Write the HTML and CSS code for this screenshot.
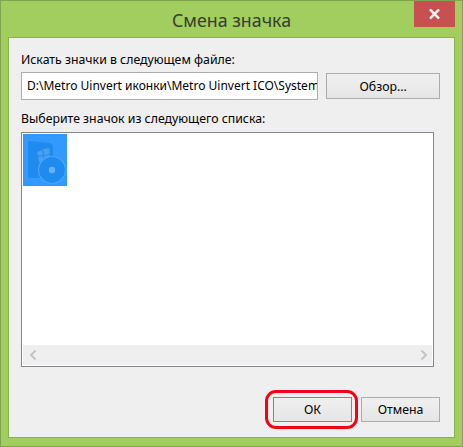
FILE: index.html
```html
<!DOCTYPE html>
<html lang="ru">

<head>
    <meta charset="UTF-8" />
    <title>Смена значка</title>
    <link rel="stylesheet" href="styles.css">
</head>

<body>

    <div class="window">
        <div class="titlebar">
            <span class="title">Смена значка</span>
            <button class="close-button" aria-label="Закрыть">
                <svg width="11" height="10" viewBox="0 0 11 10">
                    <path d="M1 0.5 L10 9.5 M10 0.5 L1 9.5" stroke="#fff" stroke-width="2.4" fill="none" />
                </svg>
            </button>
        </div>

        <div class="client">
            <div class="label">Искать значки в следующем файле:</div>
            <div class="file-row">
                <div class="file-input">D:\Metro Uinvert иконки\Metro Uinvert ICO\System</div>
                <button class="btn btn-browse">Обзор...</button>
            </div>

            <div class="label label-list">Выберите значок из следующего списка:</div>
            <div class="icon-list">
                <div class="icon-area">
                    <div class="icon-item">
                        <svg width="44" height="52" viewBox="0 0 44 52">
                            <path d="M5 7 L27 9 Q30 10 30 13 L30 44 L5 44 Z" fill="#1f8bee" />
                            <path d="M14 18 L19 16 L20 21 L15 22 Z M20 15 L26 14 L27 20 L21 21 Z M15 23 L20 22 L21 27 L16 28 Z M21 22 L27 21 L28 27 L22 28 Z" fill="#4aa0ee" />
                            <circle cx="29" cy="36" r="13.5" fill="#1f8bee" stroke="#4aa5fb" stroke-width="1.2" />
                            <circle cx="29" cy="36" r="3.2" fill="#64b2fb" />
                        </svg>
                    </div>
                </div>
                <div class="scrollbar">
                    <svg width="8" height="10" viewBox="0 0 8 10">
                        <path d="M6.5 0.5 L2 5 L6.5 9.5" stroke="#c4c4c4" stroke-width="2" fill="none" />
                    </svg>
                    <svg width="8" height="10" viewBox="0 0 8 10">
                        <path d="M1.5 0.5 L6 5 L1.5 9.5" stroke="#c4c4c4" stroke-width="2" fill="none" />
                    </svg>
                </div>
            </div>

            <div class="footer">
                <div class="ok-wrap">
                    <button class="btn btn-ok">ОК</button>
                    <span class="highlight"></span>
                </div>
                <button class="btn">Отмена</button>
            </div>
        </div>
    </div>

</body>

</html>
```

FILE: styles.css
```css
body {
    margin: 0;
    font-family: "Noto Sans", Arial, sans-serif;
    font-size: 12.3px;
    color: #000;
}

.window {
    width: 463px;
    height: 447px;
    box-sizing: border-box;
    display: flex;
    flex-direction: column;
    background-color: #a2cd5f;
    border: 1px solid #7fa34f;
    padding: 0 7px 8px 7px;
}

/* Title bar */
.titlebar {
    height: 36px;
    flex: none;
    display: flex;
    align-items: flex-start;
    justify-content: center;
    position: relative;
}

.title {
    font-size: 17.8px;
    line-height: 24px;
    margin-top: 7px;
    color: #36402c;
}

.close-button {
    position: absolute;
    top: 0;
    right: 0;
    width: 41px;
    height: 26px;
    border: none;
    padding: 0;
    background-color: #c75050;
    display: flex;
    align-items: center;
    justify-content: center;
}

/* Client area */
.client {
    flex: 1;
    display: flex;
    flex-direction: column;
    background-color: #efefef;
    border: 1px solid #89b152;
    padding: 13px 20px 0 12px;
}

.label {
    line-height: 17px;
    height: 17px;
    margin-left: 0;
}

.label-list {
    margin-top: 10px;
}

.file-row {
    display: flex;
    gap: 8px;
    margin-top: 4px;
    margin-right: -6px;
    align-items: center;
}

.file-input {
    width: 298px;
    height: 28px;
    box-sizing: border-box;
    background-color: #fff;
    border: 1px solid #abadb3;
    font-size: 12px;
    line-height: 26px;
    padding-left: 5px;
    white-space: nowrap;
    overflow: hidden;
}

.btn {
    width: 79px;
    height: 25px;
    padding: 0;
    box-sizing: border-box;
    border: 1px solid #acacac;
    background: linear-gradient(#f0f0f0, #e5e5e5);
    font-family: inherit;
    font-size: 12.3px;
    color: #000;
}

.btn-browse {
    width: 114px;
    height: 26px;
}

.btn-ok {
    border-color: #3399ff;
    display: block;
}

/* Icon list */
.icon-list {
    height: 235px;
    box-sizing: border-box;
    margin-top: 5px;
    background-color: #fff;
    border: 1px solid #828790;
    padding: 1px;
    display: flex;
    flex-direction: column;
}

.icon-area {
    flex: 1;
}

.icon-item {
    width: 44px;
    height: 52px;
    background-color: #3399ff;
}

.scrollbar {
    height: 20px;
    flex: none;
    background-color: #efefef;
    display: flex;
    align-items: center;
    justify-content: space-between;
    padding: 0 4px 0 6px;
}

/* Buttons */
.footer {
    display: flex;
    justify-content: flex-end;
    gap: 9px;
    margin-top: 30px;
    margin-right: -6px;
}

.ok-wrap {
    position: relative;
}

.highlight {
    position: absolute;
    left: -8px;
    top: -7px;
    width: 93px;
    height: 39px;
    box-sizing: border-box;
    border: 3px solid #f5001a;
    border-radius: 11px;
}
```
